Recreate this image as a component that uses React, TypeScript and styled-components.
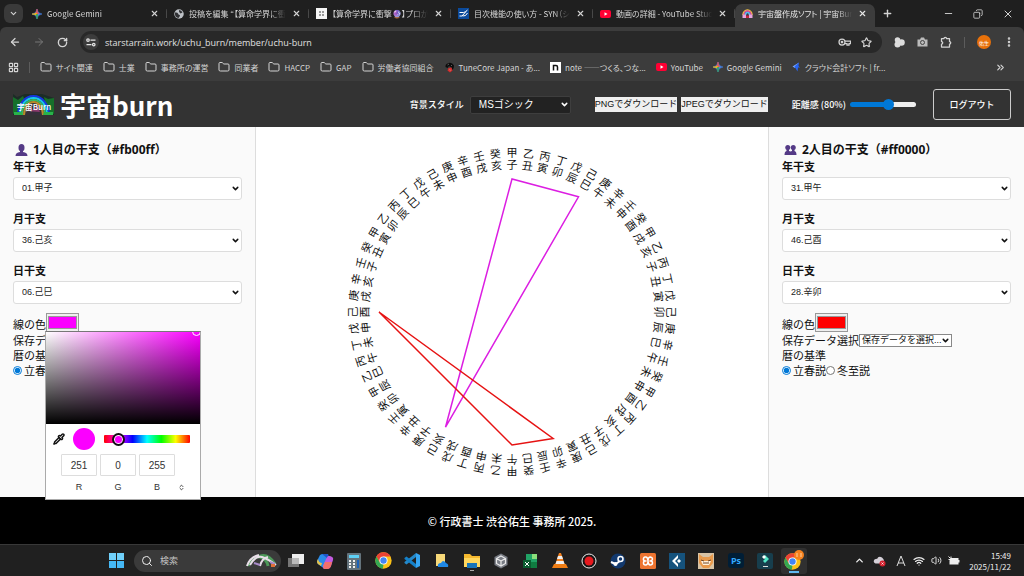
import React from "react";
import styled, { createGlobalStyle, css } from "styled-components";
import {
  ArrowLeft, ArrowRight, RotateCw, Star, EllipsisVertical, ChevronDown, ChevronUp,
  ChevronsRight, ChevronsUpDown, X, Plus, Minus, Copy, Folder, LayoutGrid, Pipette, Search,
  Wifi, Volume2,
} from "lucide-react";

const ui = `"Noto Sans CJK JP", sans-serif`;
const jp = `"Noto Sans CJK JP", sans-serif`;
const form = `"Liberation Sans", "Noto Sans CJK JP", sans-serif`;

const GlobalStyle = createGlobalStyle`
  * { box-sizing: border-box; }
  body { margin: 0; background: #000; font-family: ${jp}; }
  button, input, select { font: inherit; color: inherit; margin: 0; padding: 0; border: 0; background: none; }
  svg { display: block; flex: none; }
  h1, h2, p { margin: 0; }
`;

const Screen = styled.div`
  min-height: 100vh;
  display: flex;
  flex-direction: column;
`;

/* ---------- browser frame ---------- */
const Chrome = styled.div`
  font-family: ${ui};
  font-size: 8px;
  font-feature-settings: "palt";
  color: #d4d4d4;
  background: #1f1f1f;
`;
const TabStrip = styled.div`
  display: flex;
  align-items: center;
  height: 27px;
  padding-left: 4px;
`;
const TabMenu = styled.button`
  display: grid;
  place-items: center;
  width: 19px;
  height: 19px;
  margin-right: 2px;
  border-radius: 6px;
  background: #3a3a3a;
`;
const Tab = styled.div<{ $active?: boolean }>`
  flex: 0 1 142px;
  min-width: 0;
  height: 23px;
  margin-top: 4px;
  padding: 0 8px 4px 7px;
  display: flex;
  align-items: center;
  gap: 5px;
  border-radius: 7px 7px 0 0;
  ${(p) => p.$active
    ? css`background: #3c3c3c; color: #e8e8e8; flex-basis: 140px;`
    : css`background: linear-gradient(#484848, #484848) right 5px / 1px 9px no-repeat;`}
`;
const TabTitle = styled.span`
  flex: 1;
  overflow: hidden;
  white-space: nowrap;
  mask-image: linear-gradient(to right, #000 82%, transparent 99%);
`;
const IconButton = styled.button`
  display: grid;
  place-items: center;
  flex: none;
`;
const NewTab = styled(IconButton)`
  margin-left: 7px;
`;
const WindowControls = styled.div`
  display: flex;
  gap: 19px;
  margin-left: auto;
  padding-right: 10px;
`;
const RestoreIcon = styled(Copy)`
  transform: rotate(90deg);
`;
const Toolbar = styled.div`
  display: flex;
  align-items: center;
  gap: 12px;
  height: 30px;
  padding: 0 9px;
  background: #3c3c3c;
  border-radius: 6px 6px 0 0;
`;
const AddressBar = styled.div`
  flex: 1;
  display: flex;
  align-items: center;
  gap: 10px;
  height: 22px;
  padding: 0 10px 0 3px;
  border-radius: 11px;
  background: #282828;
`;
const SiteInfo = styled.button`
  display: grid;
  place-items: center;
  width: 16px;
  height: 16px;
  margin-right: -4px;
  border-radius: 50%;
  background: #3c3c3c;
`;
const Address = styled.input`
  flex: 1;
  min-width: 0;
  font-family: "Open Sans", sans-serif;
  font-size: 9px;
  color: #e0e0e0;
  outline: none;
`;
const Extensions = styled.div`
  display: flex;
  align-items: center;
  gap: 12px;
`;
const Divider = styled.i`
  width: 1px;
  height: 11px;
  background: #5c5c5c;
`;
const Profile = styled.button`
  width: 14px;
  height: 14px;
  border-radius: 50%;
  background: #e8710a;
  font-size: 5px;
  color: #fff;
`;
const Bookmarks = styled.nav`
  display: flex;
  align-items: center;
  height: 25px;
  padding: 0 18px 4px 8px;
  gap: 10px;
  background: #3c3c3c;
  border-bottom: 1px solid #333;
`;
const Bookmark = styled.a`
  display: flex;
  align-items: center;
  gap: 4px;
  color: inherit;
  text-decoration: none;
  white-space: nowrap;
`;
const MoreBookmarks = styled(IconButton)`
  margin-left: auto;
`;

/* ---------- page ---------- */
const Header = styled.header`
  display: flex;
  align-items: center;
  height: 45px;
  padding: 0 13px;
  background: #333;
  color: #fff;
  font-size: 9px;
  font-weight: 500;
`;
const Title = styled.h1`
  margin-left: 6px;
  font-size: 26px;
  line-height: 38px;
  font-weight: 700;
`;
const Tools = styled.div`
  display: flex;
  align-items: center;
  margin-left: auto;
  gap: 24px;
`;
const Field = styled.label<{ $gap: number }>`
  display: flex;
  align-items: center;
  gap: ${(p) => p.$gap}px;
`;
const SelectBox = styled.span<{ $width?: string }>`
  display: grid;
  align-items: center;
  width: ${(p) => p.$width ?? "100%"};
  & > * { grid-area: 1 / 1; }
  & > svg { justify-self: end; margin-right: 2px; pointer-events: none; }
`;
const Select = styled.select<{ $kind: "dark" | "field" | "plain" }>`
  appearance: none;
  width: 100%;
  font-weight: 400;
  ${(p) => p.$kind === "dark" && css`
    height: 18px; padding: 0 8px; background: #222; border: 1px solid #3e3e3e;
    border-radius: 2px; font-family: ${form}; font-size: 10px;
  `}
  ${(p) => p.$kind === "field" && css`
    height: 23px; padding: 0 8px; background: #fff; border: 1px solid #ddd;
    border-radius: 3px; font-family: ${form}; font-size: 9px; color: #222;
  `}
  ${(p) => p.$kind === "plain" && css`
    height: 13px; padding: 0 2px; background: #fff; border: 1px solid #888;
    font-family: ${form}; font-size: 9px; line-height: 11px; color: #111;
  `}
`;
const Downloads = styled.div`
  display: flex;
  gap: 4px;
`;
const DownloadButton = styled.button`
  height: 15px;
  background: #efefef;
  color: #111;
  font: 9px/15px ${form};
  white-space: nowrap;
`;
const Slider = styled.input`
  appearance: none;
  width: 66px;
  height: 5px;
  border-radius: 3px;
  background: linear-gradient(to right, #0078d7 60%, #efefef 60%);
  &::-webkit-slider-thumb {
    appearance: none;
    width: 11px;
    height: 11px;
    border-radius: 50%;
    background: #0078d7;
  }
`;
const Logout = styled.button`
  width: 78px;
  height: 31px;
  margin-left: 17px;
  border: 1px solid #ccc;
  border-radius: 3px;
`;
const Main = styled.main`
  flex: 1;
  display: grid;
  grid-template-columns: 1fr 2fr 1fr;
  background: #fff;
`;
const Panel = styled.section<{ $side: "left" | "right" }>`
  padding: 14px 13px;
  background: #fafafa;
  font-size: 11px;
  line-height: 15px;
  color: #111;
  border: 0 solid #ddd;
  ${(p) => (p.$side === "left" ? "border-right-width: 1px;" : "border-left-width: 1px;")}
`;
const PanelTitle = styled.h2`
  display: flex;
  align-items: center;
  gap: 5px;
  padding-left: 2px;
  font-family: "Noto Sans", "Noto Sans CJK JP", sans-serif;
  font-size: 12px;
  line-height: 18px;
  white-space: nowrap;
`;
const Pillars = styled.div`
  display: grid;
  gap: 11px;
  margin-bottom: 9px;
`;
const Pillar = styled.label`
  display: grid;
  gap: 3px;
  font-weight: 700;
  line-height: 15px;
`;
const ColorRow = styled.div`
  position: relative;
  display: flex;
  height: 20px;
  line-height: 22px;
`;
const ColorInput = styled.input`
  width: 33px;
  height: 19px;
  padding: 1px;
  background: #efefef;
  border: 1px solid #999;
  &::-webkit-color-swatch-wrapper { padding: 1px 0; }
  &::-webkit-color-swatch { border: 1px solid #999; }
`;
const Line = styled.div`
  display: flex;
  align-items: center;
  height: 15px;
  white-space: nowrap;
`;
const Radio = styled.input`
  width: 9px;
  height: 9px;
  margin-right: 2px;
  accent-color: #0078d7;
`;
const WheelArea = styled.section`
  display: grid;
  place-items: center;
`;
const Footer = styled.footer`
  height: 47px;
  background: #000;
  color: #fff;
  text-align: center;
  font-size: 11px;
  font-weight: 500;
  line-height: 48px;
`;

/* ---------- colour picker ---------- */
const Picker = styled.div`
  position: absolute;
  z-index: 2;
  top: 18px;
  left: 32px;
  width: 156px;
  background: #fff;
  border: 1px solid #aaa;
  border-top-color: #777;
  font-family: ${form};
  color: #333;
  line-height: 12px;
`;
const Shade = styled.div`
  position: relative;
  overflow: hidden;
  height: 92px;
  background: linear-gradient(to top, #000, transparent), linear-gradient(to right, #fff, #fb00ff);
`;
const ShadeHandle = styled.i`
  position: absolute;
  top: -5px;
  right: -1px;
  width: 9px;
  height: 9px;
  border: 1px solid #fff;
  border-radius: 50%;
`;
const PickerRow = styled.div`
  display: flex;
  align-items: center;
  height: 30px;
  padding: 0 10px 0 7px;
`;
const Current = styled.i`
  width: 22px;
  height: 22px;
  margin: 0 9px 0 8px;
  border-radius: 50%;
  background: #fb00ff;
`;
const Hue = styled.input`
  appearance: none;
  flex: 1;
  min-width: 0;
  height: 8px;
  border-radius: 1px;
  background: linear-gradient(to right, #f00, #f0f, #00f, #0ff, #0f0, #ff0, #f00);
  &::-webkit-slider-thumb {
    appearance: none;
    width: 13px;
    height: 13px;
    border-radius: 50%;
    border: 2px solid #111;
    background: #fb00ff;
    box-shadow: inset 0 0 0 1px #fff;
  }
`;
const Channels = styled.div`
  display: flex;
  align-items: flex-end;
  gap: 3px;
  padding-left: 15px;
  height: 45px;
  padding-bottom: 6px;
`;
const Channel = styled.label`
  display: flex;
  flex-direction: column-reverse;
  align-items: center;
  gap: 5px;
  font-size: 9px;
`;
const ChannelInput = styled.input`
  width: 36px;
  height: 22px;
  border: 1px solid #ddd;
  border-radius: 1px;
  text-align: center;
  font-size: 10px;
`;
const FormatButton = styled(IconButton)`
  width: 4px;
  height: 12px;
`;

/* ---------- taskbar ---------- */
const Taskbar = styled.div`
  display: flex;
  align-items: center;
  height: 32px;
  padding: 0 13px 0 108px;
  background: #202020;
  border-top: 1px solid #383838;
  font-family: ${ui};
  font-size: 9px;
  color: #eee;
`;
const SearchBox = styled.label`
  display: flex;
  align-items: center;
  gap: 7px;
  width: 147px;
  height: 22px;
  margin-left: 9px;
  padding: 0 3px 0 7px;
  border-radius: 11px;
  background: #3a3a3a;
`;
const SearchInput = styled.input`
  flex: 1;
  min-width: 0;
  outline: none;
  &::placeholder { color: #c4c4c4; }
`;
const Apps = styled.div`
  display: grid;
  grid-template-columns: repeat(18, 1fr);
  width: 528px;
`;
const TaskButton = styled.button<{ $active?: boolean }>`
  display: grid;
  place-items: center;
  justify-self: center;
  width: 26px;
  height: 26px;
  border-radius: 3px;
  ${(p) => p.$active && css`background: #303030;`}
`;
const Tray = styled.div`
  display: flex;
  align-items: center;
  gap: 6px;
  margin-left: auto;
`;
const Clock = styled.time`
  margin-left: 3px;
  text-align: right;
  font-size: 8px;
  line-height: 11px;
`;

/* ---------- drawings ---------- */
const GeminiIcon = () => (
  <svg width="10" height="10" viewBox="0 0 20 20">
    <path d="M10 0Q11 9 20 10Q11 11 10 20Q9 11 0 10Q9 9 10 0Z" fill="#4688f4" stroke="#4688f4" />
    <path d="M10 0Q11 9 14 9.200L10 10L6 9Q9 8 10 0Z" fill="#ef5350" stroke="#ef5350" />
    <path d="M0 10Q6 9.500 8 8L10 10L8 12Q6 11 0 10Z" fill="#fbbc04" stroke="#fbbc04" />
    <path d="M10 20Q9 13 8 12L10 10L12 12Q11 13 10 20Z" fill="#34a853" stroke="#34a853" />
  </svg>
);
const YoutubeIcon = () => (
  <svg width="11" height="8" viewBox="0 0 22 16"><rect width="22" height="16" rx="4" fill="#f03" /><path d="M9 4.500v7l6-3.500z" fill="#fff" /></svg>
);
const GlobeIcon = () => (
  <svg width="10" height="10" viewBox="0 0 20 20"><circle cx="10" cy="10" r="9.500" fill="#bdc1c6" /><path d="M2 7q5-1 6 2t4 3q0 3-3 6Q1 17 2 7zM10 2q5 0 7 5l-4 2q-4-2-3-7z" fill="#303134" /></svg>
);
const GridSiteIcon = () => (
  <svg width="11" height="11" viewBox="0 0 11 11"><rect width="11" height="11" fill="#f5f5f5" /><path d="M3 3h2v2H3zM6 3h2v2H6zM3 6h2v2H3zM6 6h2v2H6z" fill="#999" /></svg>
);
const SynIcon = () => (
  <svg width="11" height="11" viewBox="0 0 22 22"><rect width="22" height="22" fill="#0b4a9b" /><path d="M3 9h8q3 0 8-5M3 16h5l8-9M9 16q7 1 10-6" stroke="#fff" strokeWidth="2" fill="none" /></svg>
);
const BurnIcon = () => (
  <svg width="11" height="11" viewBox="0 0 22 22">
    <path d="M2 14a9 10 0 0 1 18 0" stroke="#f5c542" strokeWidth="3" fill="none" />
    <path d="M4 14a7 8 0 0 1 14 0" stroke="#e24ea0" strokeWidth="3" fill="none" />
    <path d="M7 14a4 5 0 0 1 8 0" stroke="#55b9f3" strokeWidth="3" fill="none" />
    <path d="M1 13h7v7H1zM14 13h7v7h-7z" fill="#e8a5de" /><path d="M8 15h6v5H8z" fill="#c2273e" />
  </svg>
);
const TuneIcon = () => (
  <svg width="11" height="11" viewBox="0 0 22 22"><path d="M3 10q-1-6 6-8t11 5q0 6-3 9l-2-5-5-3-3 4z" fill="#0c0c0c" /><path d="M9 12l6-1 2 6-5 4-5-4z" fill="#d92b2b" /><path d="M7 6l3-2M14 6l2 2M10 15l4 2" stroke="#aaa" /></svg>
);
const NoteIcon = () => (
  <svg width="11" height="11" viewBox="0 0 22 22"><rect width="22" height="22" fill="#fff" /><path d="M7 17V7h5q3 0 3 3v7" stroke="#111" strokeWidth="3" fill="none" /></svg>
);
const FreeeIcon = () => (
  <svg width="9" height="10" viewBox="0 0 18 20"><path d="M14 1L1 9l5 3z" fill="#79a7ff" /><path d="M14 1L5 9l6 10 1-8h4l-3-3z" fill="#2864f0" /></svg>
);
const LogoArt = () => (
  <svg width="41" height="21" viewBox="0 0 41 21">
    <rect width="41" height="21" fill="#1c2c26" />
    <path d="M0 3l5 3 5-4 2 5-4 8-8 5zM41 4l-6 1-4-2 2 9 4 6 4 2z" fill="#16702a" />
    <path d="M0 0h12L4 3zM29 0h12v4z" fill="#333" />
    <path d="M5 21a15.500 19 0 0 1 31 0" fill="none" stroke="#1536e0" strokeWidth="2" />
    <path d="M7 21a13.500 17 0 0 1 27 0" fill="none" stroke="#19c8f0" strokeWidth="2" />
    <path d="M9 21a11.500 15 0 0 1 23 0" fill="none" stroke="#38b860" strokeWidth="2" />
    <path d="M11 21a9.500 13 0 0 1 19 0" fill="#35303a" stroke="#b98a2a" strokeWidth="2" />
    <path d="M14 17l3-4 3 3 4-5 3 7z" fill="#8a3a6d" />
    <path d="M1 18h7l2 3H1zM31 18h9v3H30z" fill="#29b34a" />
    <text x="21" y="16" textAnchor="middle" fontFamily="Noto Sans CJK JP" fontSize="8" fill="#fff">宇宙Burn</text>
  </svg>
);
const Bust = ({ pair }: { pair?: boolean }) => (
  <svg width="13" height="12" viewBox="0 0 26 24" fill="#543a86">
    {pair ? (
      <>
        <circle cx="7.500" cy="7" r="5" /><circle cx="18.500" cy="7" r="5" />
        <path d="M5 10h5v4l3 1 3-1v-4h5v4q4 1 4 8H1q0-7 4-8z" />
      </>
    ) : (
      <><ellipse cx="13" cy="7.500" rx="6" ry="7.500" /><path d="M10 12h6v4q9 1 9 8H1q0-7 9-8z" /></>
    )}
  </svg>
);
const ChromeIcon = () => (
  <svg width="17" height="17" viewBox="0 0 48 48">
    <circle cx="24" cy="24" r="23" fill="#fbc116" />
    <path d="M4 12.500A23 23 0 0 1 44 12.500H24L14 30z" fill="#ea4335" />
    <path d="M4 12.500L14 30l10 5-2 12A23 23 0 0 1 4 12.500z" fill="#34a853" />
    <circle cx="24" cy="24" r="11.500" fill="#fff" /><circle cx="24" cy="24" r="9" fill="#4285f4" />
  </svg>
);

const taskIcons: [string, React.ReactNode][] = [
  ["タスクビュー", <svg width="18" height="18" viewBox="0 0 18 18"><path d="M1 6h11v9H1z" fill="#777" /><path d="M5 2h12v10H5z" fill="#eee" /><path d="M5 6h7v6H5z" fill="#bbb" /></svg>],
  ["Copilot", <svg width="18" height="18" viewBox="0 0 18 18"><path d="M6 2h5q2 0 1 3L9 13q-1 3-3 2L2 12Q0 10 2 7l2-4z" fill="#2a8bea" /><path d="M2 7q1 4 4 4l-1 3-3-2q-2-2 0-5z" fill="#e6c34a" /><path d="M6 2h5q2 0 1 3l-1 1z" fill="#1f55c8" /><path d="M12 4h2q4 1 3 4l-2 6q-1 3-4 3H8q-2-1-1-3l3-7z" fill="#c35be0" /><path d="M7 14l2-4h7l-1 4q-1 3-3 3H8z" fill="#f2706b" /></svg>],
  ["電卓", <svg width="14" height="18" viewBox="0 0 14 18"><rect width="14" height="17" y="1" rx="1" fill="#64737c" /><path d="M2 3h10v3H2z" fill="#5ed0f5" /><path d="M2 8h2v2H2zM6 8h2v2H6zM2 11h2v2H2zM6 11h2v2H6zM2 14h2v2H2zM6 14h2v2H6z" fill="#f2f2f2" /><path d="M10 8h2v8h-2z" fill="#1b62b8" /></svg>],
  ["Chrome", <ChromeIcon />],
  ["VS Code", <svg width="17" height="17" viewBox="0 0 34 34"><path d="M24 10L5 25l-4-3v-2L24 2z" fill="#2489ca" /><path d="M24 24L5 9l-4 3v2l23 18z" fill="#1581c9" /><path d="M24 2l8 4v22l-8 4z" fill="#35a5f2" /></svg>],
  ["OneDrive", <svg width="14" height="16" viewBox="0 0 14 16"><path d="M1 1h9v12H1z" fill="#f7d979" /><path d="M3 14q-1-4 3-4 2-4 5 0 3 1 2 4z" fill="#1f88e5" /></svg>],
  ["エクスプローラー", <svg width="17" height="20" viewBox="0 0 17 20"><path d="M1 3h6l2 2h8v11H1z" fill="#f5b82e" /><path d="M1 7h16v9H1z" fill="#ffd75e" /><path d="M4 12h10v5H4z" fill="#1974b8" /><path d="M7 19h4v1H7z" fill="#aaa" /></svg>],
  ["Unity Hub", <svg width="16" height="16" viewBox="0 0 32 32"><path d="M16 1l13 7v16l-13 7-13-7V8z" fill="#777b83" /><path d="M16 6l9 5v10l-9 5-9-5V11zM16 16v10M16 16l-9-5M16 16l9-5" stroke="#e8e8e8" strokeWidth="2.500" fill="none" /></svg>],
  ["Excel", <svg width="16" height="16" viewBox="0 0 16 16"><path d="M4 1h11v14H4z" fill="#21a366" /><path d="M10 1h5v5h-5z" fill="#8be07c" /><path d="M4 9h11v6H4z" fill="#107c41" /><path d="M1 7h8v8H1z" fill="#0b5d30" /><path d="M3 9l4 4M7 9l-4 4" stroke="#fff" /></svg>],
  ["VLC", <svg width="16" height="17" viewBox="0 0 16 17"><path d="M7 1h2l4 12H3z" fill="#f58220" /><path d="M6 4h4l1 3H5zM4.500 9h7l1 3h-9z" fill="#eee" /><path d="M2 12h12l2 4H0z" fill="#ef7d14" /></svg>],
  ["録画", <svg width="16" height="16" viewBox="0 0 16 16"><circle cx="8" cy="8" r="7" fill="#161616" stroke="#eee" /><circle cx="8" cy="8" r="4.500" fill="#e6191e" /></svg>],
  ["Steam", <svg width="16" height="16" viewBox="0 0 32 32"><circle cx="16" cy="16" r="15" fill="#12396e" /><path d="M2 18l9 4 9-6" stroke="#fff" strokeWidth="4" fill="none" /><circle cx="21" cy="12" r="5" fill="#12396e" stroke="#fff" strokeWidth="3" /><circle cx="11" cy="22" r="4" fill="#fff" /></svg>],
  ["XAMPP", <svg width="16" height="16" viewBox="0 0 32 32"><rect width="32" height="32" rx="3" fill="#ee7430" /><path d="M13 16H10q-4-1-3-5t5-3q4 1 4 8t4 8q5 0 5-4t-4-4h-2M19 16h2q4-1 4-4t-4-4q-5 0-5 8t-5 8q-4 0-4-4t3-4" stroke="#fff" strokeWidth="3" fill="none" strokeLinejoin="round" /></svg>],
  ["Cursor", <svg width="16" height="16" viewBox="0 0 16 16"><rect width="16" height="16" fill="#15527c" /><path d="M9 2L3 8l6 6V11L6 8l3-3z" fill="#fff" /><path d="M10 6l2 2-2 2-2-2z" fill="#fff" /></svg>],
  ["キツネ", <svg width="16" height="16" viewBox="0 0 16 16"><rect width="16" height="16" fill="#d8c3a4" /><path d="M1 1l4 3h6l4-3v9l-4 5H5l-4-5z" fill="#e89a4c" /><path d="M3 8h10l-2 4H5z" fill="#fff1da" /><path d="M3 7l3 1M13 7l-3 1M5 10h6" stroke="#6e4526" /></svg>],
  ["Photoshop", <svg width="16" height="15" viewBox="0 0 16 15"><rect width="16" height="15" rx="3" fill="#001e36" /><text x="8" y="11" textAnchor="middle" fontFamily="Open Sans" fontWeight="700" fontSize="9" fill="#31a8ff">Ps</text></svg>],
  ["Filmora", <svg width="16" height="16" viewBox="0 0 16 16"><rect width="16" height="16" rx="2" fill="#173e4d" /><path d="M8 2l4 4-4 4-2-2 2-2-2-2z" fill="#52e5c6" /><path d="M7 2l2 2-2 2-2-2z" fill="#fff" /><path d="M6 13h5v1H6z" fill="#ddd" /></svg>],
  ["Chrome (佑生)", <svg width="22" height="24" viewBox="0 0 22 24"><g transform="translate(1 4)"><ChromeIcon /></g><circle cx="16" cy="6" r="5" fill="#f5821f" /><path d="M13 5h2M13 7h2M17 5h2M17 7h2" stroke="#ffd0a0" /><path d="M6 22h10v2H6z" fill="#60b8f0" /></svg>],
];

/* ---------- sexagenary wheel ---------- */
const STEMS = "甲乙丙丁戊己庚辛壬癸";
const BRANCHES = "子丑寅卯辰巳午未申酉戌亥";
const name = (n: number) => STEMS[(n - 1) % 10] + BRANCHES[(n - 1) % 12];
const cycle = Array.from({ length: 60 }, (_, i) => i + 1);
const point = (n: number) => {
  const a = ((n - 1) * 6 * Math.PI) / 180;
  return `${133 * Math.sin(a)},${-133 * Math.cos(a)}`;
};

type PersonData = { color: string; line: string; values: number[] };

const Wheel = ({ people }: { people: PersonData[] }) => (
  <svg width="344" height="344" viewBox="-172 -172 344 344" role="img" aria-label="宇宙盤">
    <g fontFamily="Noto Sans CJK JP, sans-serif" fontSize="11" textAnchor="middle" fill="#111">
      {cycle.map((n) => (
        <g key={n} transform={`rotate(${(n - 1) * 6})`}>
          <text y="-155">{name(n)[0]}</text>
          <text y="-143">{name(n)[1]}</text>
        </g>
      ))}
    </g>
    {people.map((p) => (
      <polygon key={p.color} points={p.values.map(point).join(" ")} fill="none" stroke={p.line} strokeWidth="1.500" />
    ))}
  </svg>
);

const SelectField = ({ kind, width, value, options }: {
  kind: "dark" | "field" | "plain"; width?: string; value: string; options: string[];
}) => (
  <SelectBox $width={width}>
    <Select $kind={kind} defaultValue={value}>
      {options.map((o) => <option key={o}>{o}</option>)}
    </Select>
    <ChevronDown size={9} strokeWidth={4} />
  </SelectBox>
);

const numbered = (n: number) => `${String(n).padStart(2, "0")}.${name(n)}`;

const ColorPicker = () => (
  <Picker>
    <Shade><ShadeHandle /></Shade>
    <PickerRow>
      <IconButton aria-label="スポイト"><Pipette size={12} color="#111" strokeWidth={3} /></IconButton>
      <Current />
      <Hue type="range" min={0} max={360} defaultValue={40} aria-label="色相" />
    </PickerRow>
    <Channels>
      {[["R", "251"], ["G", "0"], ["B", "255"]].map(([c, v]) => (
        <Channel key={c}>{c}<ChannelInput defaultValue={v} /></Channel>
      ))}
      <FormatButton aria-label="形式を切り替え"><ChevronsUpDown size={7} strokeWidth={3} /></FormatButton>
    </Channels>
  </Picker>
);

const Person = ({ index, color, values, side, picker }: {
  index: number; color: string; values: number[]; side: "left" | "right"; picker?: boolean;
}) => (
  <Panel $side={side}>
    <PanelTitle><Bust pair={index === 2} />{`${index}人目の干支（${color}）`}</PanelTitle>
    <Pillars>
      {["年干支", "月干支", "日干支"].map((label, i) => (
        <Pillar key={label}>
          {label}
          <SelectField kind="field" value={numbered(values[i])} options={cycle.map(numbered)} />
        </Pillar>
      ))}
    </Pillars>
    <ColorRow>
      <label htmlFor={`color${index}`}>線の色</label>
      <ColorInput id={`color${index}`} type="color" defaultValue={color} />
      {picker && <ColorPicker />}
    </ColorRow>
    <Line as="label">
      保存データ選択
      <SelectField kind="plain" width="93px" value="保存データを選択..." options={["保存データを選択..."]} />
    </Line>
    <Line>暦の基準</Line>
    <Line>
      <Line as="label"><Radio type="radio" name={`calendar${index}`} defaultChecked />立春説</Line>
      <Line as="label"><Radio type="radio" name={`calendar${index}`} />冬至説</Line>
    </Line>
  </Panel>
);

const tabs: [React.ReactNode, string][] = [
  [<GeminiIcon />, "Google Gemini"],
  [<GlobeIcon />, "投稿を編集 “【算命学界に衝撃】"],
  [<GridSiteIcon />, "【算命学界に衝撃🔮】プロが使う"],
  [<SynIcon />, "目次機能の使い方 - SYN（シン）"],
  [<YoutubeIcon />, "動画の詳細 - YouTube Studio"],
  [<BurnIcon />, "宇宙盤作成ソフト | 宇宙Burn 会員"],
];

const folder = <Folder size={12} strokeWidth={2} />;
const bookmarks: [React.ReactNode, string][] = [
  [folder, "サイト関連"], [folder, "士業"], [folder, "事務所の運営"], [folder, "同業者"], [folder, "HACCP"],
  [folder, "GAP"], [folder, "労働者協同組合"], [<TuneIcon />, "TuneCore Japan - あ..."],
  [<NoteIcon />, "note ――つくる、つな..."], [<YoutubeIcon />, "YouTube"], [<GeminiIcon />, "Google Gemini"],
  [<FreeeIcon />, "クラウド会計ソフト | fr..."],
];

const people: PersonData[] = [
  { color: "#fb00ff", line: "#dc1ee2", values: [1, 36, 6] },
  { color: "#ff0000", line: "#e61212", values: [31, 46, 28] },
];

export default function App() {
  return (
    <Screen>
      <GlobalStyle />
      <Chrome>
        <TabStrip>
          <TabMenu aria-label="タブを検索"><ChevronDown size={9} strokeWidth={3} /></TabMenu>
          {tabs.map(([icon, title], i) => (
            <Tab key={title} $active={i === 5}>
              {icon}
              <TabTitle>{title}</TabTitle>
              <IconButton aria-label="閉じる"><X size={9} strokeWidth={3} /></IconButton>
            </Tab>
          ))}
          <NewTab aria-label="新しいタブ"><Plus size={11} strokeWidth={3} /></NewTab>
          <WindowControls>
            <IconButton aria-label="最小化"><Minus size={11} /></IconButton>
            <IconButton aria-label="元に戻す"><RestoreIcon size={10} /></IconButton>
            <IconButton aria-label="閉じる"><X size={12} /></IconButton>
          </WindowControls>
        </TabStrip>
        <Toolbar>
          <IconButton aria-label="戻る"><ArrowLeft size={12} strokeWidth={2.5} /></IconButton>
          <IconButton aria-label="進む"><ArrowRight size={12} color="#777" /></IconButton>
          <IconButton aria-label="再読み込み"><RotateCw size={11} strokeWidth={3} /></IconButton>
          <AddressBar>
            <SiteInfo aria-label="サイト情報">
              <svg width="10" height="9" viewBox="0 0 20 18" fill="none" stroke="#e4e4e4" strokeWidth="2.500"><circle cx="4" cy="4" r="2.500" /><path d="M9 4h10M1 13h10" /><circle cx="15.500" cy="13" r="2.500" /></svg>
            </SiteInfo>
            <Address aria-label="アドレス" defaultValue="starstarrain.work/uchu_burn/member/uchu-burn" />
            <IconButton aria-label="パスワード">
              <svg width="13" height="8" viewBox="0 0 26 16" fill="none" stroke="#d4d4d4" strokeWidth="2.500"><circle cx="8" cy="8" r="6" /><circle cx="8" cy="8" r="1.500" /><path d="M14 6h11v5h-3v3h-4v-3h-4" /></svg>
            </IconButton>
            <IconButton aria-label="ブックマーク"><Star size={11} strokeWidth={2.5} /></IconButton>
          </AddressBar>
          <Extensions>
            <IconButton aria-label="拡張機能 1"><svg width="11" height="11" viewBox="0 0 22 22" fill="#ddd"><circle cx="7" cy="6" r="5.500" /><circle cx="7" cy="15" r="6" /><circle cx="15" cy="11" r="6.500" /></svg></IconButton>
            <IconButton aria-label="カメラ"><svg width="11" height="10" viewBox="0 0 22 20"><path d="M1 5h5l2-4h6l2 4h5v14H1z" fill="#bbb" /><circle cx="11" cy="11" r="4" fill="#bbb" stroke="#444" strokeWidth="2" /></svg></IconButton>
            <IconButton aria-label="拡張機能">
              <svg width="12" height="12" viewBox="0 0 24 24" fill="none" stroke="#d4d4d4" strokeWidth="2.500" strokeLinejoin="round"><path d="M3 5h5a2.500 2.500 0 0 1 5 0h6v6a2.500 2.500 0 0 1 0 5v6H3v-6a2.500 2.500 0 0 0 0-5z" /></svg>
            </IconButton>
            <Divider />
            <Profile>佑生</Profile>
            <IconButton aria-label="メニュー"><EllipsisVertical size={12} strokeWidth={3} /></IconButton>
          </Extensions>
        </Toolbar>
        <Bookmarks>
          <IconButton aria-label="アプリ"><LayoutGrid size={11} strokeWidth={2.5} /></IconButton>
          <Divider />
          {bookmarks.map(([icon, text]) => <Bookmark key={text} href="#">{icon}{text}</Bookmark>)}
          <MoreBookmarks aria-label="その他"><ChevronsRight size={11} strokeWidth={2.5} /></MoreBookmarks>
        </Bookmarks>
      </Chrome>

      <Header>
        <LogoArt />
        <Title>宇宙burn</Title>
        <Tools>
          <Field $gap={6}>
            背景スタイル
            <SelectField kind="dark" width="101px" value="MSゴシック" options={["MSゴシック"]} />
          </Field>
          <Downloads>
            <DownloadButton>PNGでダウンロード</DownloadButton>
            <DownloadButton>JPEGでダウンロード</DownloadButton>
          </Downloads>
          <Field $gap={4}>
            距離感 (80%)
            <Slider type="range" min={50} max={100} defaultValue={80} />
          </Field>
        </Tools>
        <Logout>ログアウト</Logout>
      </Header>

      <Main>
        <Person index={1} side="left" picker color={people[0].color} values={people[0].values} />
        <WheelArea><Wheel people={people} /></WheelArea>
        <Person index={2} side="right" color={people[1].color} values={people[1].values} />
      </Main>

      <Footer>© 行政書士 渋谷佑生 事務所 2025.</Footer>

      <Taskbar>
        <IconButton aria-label="スタート">
          <svg width="17" height="17" viewBox="0 0 17 17" fill="#45b8f5"><path d="M1 1h7v7H1zM9 1h7v7H9z" fill="#6fd0fa" /><path d="M1 9h7v7H1zM9 9h7v7H9z" /></svg>
        </IconButton>
        <SearchBox>
          <Search size={12} />
          <SearchInput placeholder="検索" />
          <svg width="32" height="16" viewBox="0 0 32 16" fill="none">
            <path d="M2 13q5-11 12-9t8 9M12 4q9-5 17 7" stroke="#4e9a5a" strokeWidth="3" />
            <path d="M4 12q6-10 12-8t14 8M14 13q2-8 8-9M1 13q3-9 12-11" stroke="#e9dfe9" strokeWidth="2" />
            <path d="M8 10l6 2M24 9l5 2" stroke="#a88ac8" strokeWidth="2" /><path d="M25 11h4v3h-4z" fill="#e0703a" />
          </svg>
        </SearchBox>
        <Apps>
          {taskIcons.map(([label, icon], i) => (
            <TaskButton key={label} aria-label={label} $active={i === 17}>{icon}</TaskButton>
          ))}
        </Apps>
        <Tray>
          <ChevronUp size={11} strokeWidth={3} />
          <svg width="18" height="12" viewBox="0 0 36 24"><g transform="translate(4 0)"><path d="M5 17q-6-3-2-8 4-2 5-1 3-7 10-3 4 3 4 7l-4 5z" fill="#d5d0d8" /><circle cx="19" cy="17" r="6" fill="#d4202d" /><path d="M17 15l4 4M21 15l-4 4" stroke="#fff" strokeWidth="1.500" /></g></svg>
          <svg width="12" height="14" viewBox="0 0 12 14"><path d="M2 12L6 2l4 10M3 9h6" stroke="#ddd" fill="none" /></svg>
          <Wifi size={12} strokeWidth={2.5} />
          <Volume2 size={11} />
          <svg width="12" height="9" viewBox="0 0 24 18"><path d="M5 4h16v4h2v5h-2v4H3V9z" fill="#eee" /><path d="M1 1l3 3M6 1v5M1 7h6" stroke="#eee" strokeWidth="2" /></svg>
          <Clock>15:49<br />2025/11/22</Clock>
        </Tray>
      </Taskbar>
    </Screen>
  );
}
